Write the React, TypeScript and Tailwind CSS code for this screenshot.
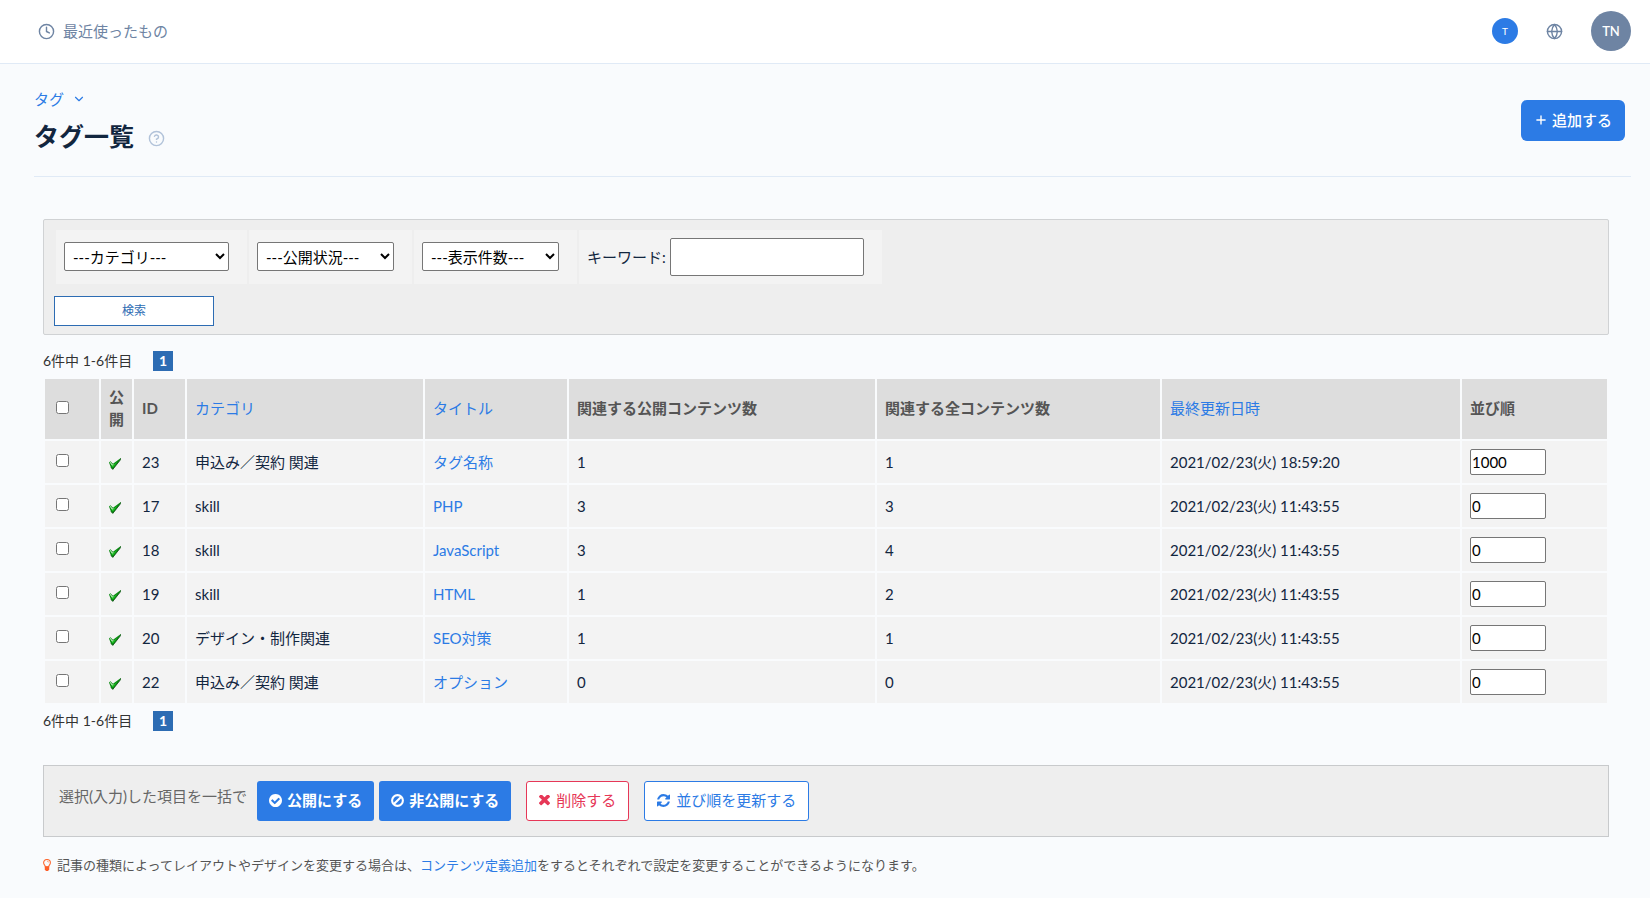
import React, { useState } from 'react';
import { FiChevronDown, FiClock, FiGlobe, FiHelpCircle, FiPlus } from 'react-icons/fi';

interface Tag {
    id: number;
    category: string;
    title: string;
    published: number;
    total: number;
    updatedAt: string;
    order: string;
}

const TAGS: Tag[] = [
    { id: 23, category: '申込み／契約 関連', title: 'タグ名称', published: 1, total: 1, updatedAt: '2021/02/23(火) 18:59:20', order: '1000' },
    { id: 17, category: 'skill', title: 'PHP', published: 3, total: 3, updatedAt: '2021/02/23(火) 11:43:55', order: '0' },
    { id: 18, category: 'skill', title: 'JavaScript', published: 3, total: 4, updatedAt: '2021/02/23(火) 11:43:55', order: '0' },
    { id: 19, category: 'skill', title: 'HTML', published: 1, total: 2, updatedAt: '2021/02/23(火) 11:43:55', order: '0' },
    { id: 20, category: 'デザイン・制作関連', title: 'SEO対策', published: 1, total: 1, updatedAt: '2021/02/23(火) 11:43:55', order: '0' },
    { id: 22, category: '申込み／契約 関連', title: 'オプション', published: 0, total: 0, updatedAt: '2021/02/23(火) 11:43:55', order: '0' },
];

const CheckCircleIcon = () => (
    <svg viewBox="128 128 1536 1536" className="size-[13px]" fill="currentColor" aria-hidden="true">
        <path d="M1412 734q0-28-18-46l-91-90q-19-19-45-19t-45 19l-408 407-226-226q-19-19-45-19t-45 19l-91 90q-18 18-18 46 0 27 18 45l362 362q19 19 45 19 27 0 46-19l543-543q18-18 18-45zm252 162q0 209-103 385.5t-279.5 279.5-385.5 103-385.5-103-279.5-279.5-103-385.5 103-385.5 279.5-279.5 385.5-103 385.5 103 279.5 279.5 103 385.5z" />
    </svg>
);

const BanIcon = () => (
    <svg viewBox="0 0 13 13" className="size-[13px]" fill="none" stroke="currentColor" strokeWidth="2.1" aria-hidden="true">
        <circle cx="6.5" cy="6.5" r="5.4" />
        <path d="M2.7 10.3l7.6-7.6" />
    </svg>
);

const TimesIcon = () => (
    <svg viewBox="302 434 1188 1188" className="size-[11px]" fill="currentColor" aria-hidden="true">
        <path d="M1490 1322q0 40-28 68l-136 136q-28 28-68 28t-68-28l-294-294-294 294q-28 28-68 28t-68-28l-136-136q-28-28-28-68t28-68l294-294-294-294q-28-28-28-68t28-68l136-136q28-28 68-28t68 28l294 294 294-294q28-28 68-28t68 28l136 136q28 28 28 68t-28 68l-294 294 294 294q28 28 28 68z" />
    </svg>
);

const RefreshIcon = () => (
    <svg viewBox="0 0 1536 1536" className="size-[13px]" fill="currentColor" aria-hidden="true">
        <path d="M1511 928q0 5-1 7-64 268-268 434.5t-478 166.5q-146 0-282.5-55t-243.5-157l-129 129q-19 19-45 19t-45-19-19-45v-448q0-26 19-45t45-19h448q26 0 45 19t19 45-19 45l-137 137q71 66 161 102t187 36q134 0 250-65t186-179q11-17 53-117 8-23 30-23h192q13 0 22.5 9.5t9.5 22.5zm25-800v448q0 26-19 45t-45 19h-448q-26 0-45-19t-19-45 19-45l138-138q-148-137-349-137-134 0-250 65t-186 179q-11 17-53 117-8 23-30 23h-199q-13 0-22.5-9.5t-9.5-22.5v-7q65-268 270-434.5t480-166.5q146 0 284 55.5t245 156.5l130-129q19-19 45-19t45 19 19 45z" />
    </svg>
);

const BulbIcon = () => (
    <svg viewBox="0 0 8 12" className="h-3 w-2" fill="none" stroke="#fd6a33" aria-hidden="true">
        <path d="M2.4 8C2.4 6.4.6 5.9.6 3.8a3.4 3.3 0 0 1 6.8 0c0 2.1-1.8 2.6-1.8 4.2z" strokeWidth="1.1" />
        <path d="M4.2 2.2c.8 0 1.4.5 1.4 1.2" strokeWidth=".7" />
        <path d="M1.8 7.2h4.4v3.2L5 11.9H3l-1.2-1.5z" fill="#fd5f2a" stroke="none" />
    </svg>
);

const PublishedIcon = () => (
    <svg viewBox="0 0 12 12" className="size-3" role="img" aria-label="公開">
        <path d="M0 4.4l1.4-1.2L4 5.8 11.8 0l-.2 1.6-7.8 9.9L2 9.8z" fill="#0a8a12" />
        <path d="M.8 4.6l.8-.5 1.8 2.4 1.4-.8L3.6 8.6z" fill="#c9f2c9" />
        <path d="M2.2 7.2l1.5.4L8.6 3.6 4 9.6z" fill="#1fc426" />
        <path d="M11.8.2l-.2 1.4-7.8 9.8L2 9.6" fill="none" stroke="#0b4d10" strokeWidth=".8" />
    </svg>
);

const Pager: React.FC = () => (
    <div className="flex h-5 items-center gap-[21px] text-sm text-[#333]">
        <span>6件中 1-6件目</span>
        <span className="flex size-5 items-center justify-center bg-[#2d6cb3] font-bold text-white">1</span>
    </div>
);

const FilterSelect: React.FC<{ label: string; className: string }> = ({ label, className }) => (
    <div className="bg-[#f3f3f3] py-3 pl-2 pr-[18px]">
        <select
            aria-label={label}
            className={`block h-[29px] rounded-[2px] border border-[#767676] bg-white px-1 text-[15px] text-black ${className}`}
        >
            <option>---{label}---</option>
        </select>
    </div>
);

const SolidButton: React.FC<{ icon: React.ReactNode; children: React.ReactNode }> = ({ icon, children }) => (
    <button type="button" className="flex h-10 items-center gap-[5px] rounded-[3px] bg-[#2c7be5] px-3 pb-[2px] font-bold text-white">
        {icon}
        {children}
    </button>
);

const OutlineButton: React.FC<{ icon: React.ReactNode; className: string; children: React.ReactNode }> = ({ icon, className, children }) => (
    <button type="button" className={`flex h-10 items-center gap-[6px] rounded-[3px] border bg-white px-3 pb-[2px] ${className}`}>
        {icon}
        {children}
    </button>
);

const Header: React.FC = () => (
    <header className="flex h-16 items-center justify-between border-b border-[#e0eaf6] bg-white pb-px pl-[38px] pr-[19px] text-[#6e84a3]">
        <a href="#recent" className="flex items-center gap-2">
            <FiClock size={17} />
            <span>最近使ったもの</span>
        </a>
        <div className="flex items-center gap-7">
            <span className="flex size-[26px] items-center justify-center rounded-full bg-[#2c7be5] text-[10px] text-white">T</span>
            <button type="button" aria-label="言語">
                <FiGlobe size={17} />
            </button>
            <button type="button" className="flex size-10 items-center justify-center rounded-full bg-[#6e84a3] text-[13px] font-semibold text-white">
                TN
            </button>
        </div>
    </header>
);

const TagTable: React.FC = () => {
    const [orders, setOrders] = useState<Record<number, string>>(
        Object.fromEntries(TAGS.map(tag => [tag.id, tag.order]))
    );
    const [selected, setSelected] = useState<number[]>([]);

    const toggle = (id: number) => {
        setSelected(s => (s.includes(id) ? s.filter(x => x !== id) : [...s, id]));
    };

    const toggleAll = () => {
        setSelected(s => (s.length === TAGS.length ? [] : TAGS.map(tag => tag.id)));
    };

    return (
        <table className="w-full border-separate border-spacing-[2px] text-left">
            <thead>
                <tr className="h-[60px] text-[#555] [&>th]:bg-[#ddd] [&>th]:px-2 [&>th]:pb-[2px]">
                    <th className="w-[54px]">
                        <input type="checkbox" aria-label="すべて選択" className="mb-[2px] ml-[3px] block size-[13px]" checked={selected.length === TAGS.length} onChange={toggleAll} />
                    </th>
                    <th className="w-[31px]">公開</th>
                    <th className="w-[51px]">ID</th>
                    <th className="w-[236px] font-normal"><a href="#category" className="text-[#2c7be5]">カテゴリ</a></th>
                    <th className="w-[142px] font-normal"><a href="#title" className="text-[#2c7be5]">タイトル</a></th>
                    <th className="w-[306px]">関連する公開コンテンツ数</th>
                    <th className="w-[283px]">関連する全コンテンツ数</th>
                    <th className="w-[298px] font-normal"><a href="#updated" className="text-[#2c7be5]">最終更新日時</a></th>
                    <th>並び順</th>
                </tr>
            </thead>
            <tbody>
                {TAGS.map(tag => (
                    <tr key={tag.id} className="h-[42px] [&>td]:bg-[#f3f3f3] [&>td]:px-2">
                        <td>
                            <input type="checkbox" aria-label={`${tag.title}を選択`} className="mb-[3px] ml-[3px] block size-[13px]" checked={selected.includes(tag.id)} onChange={() => toggle(tag.id)} />
                        </td>
                        <td className="pt-1"><PublishedIcon /></td>
                        <td className="pb-px">{tag.id}</td>
                        <td className="pb-px">{tag.category}</td>
                        <td className="pb-px"><a href={`#tag-${tag.id}`} className="text-[#2c7be5]">{tag.title}</a></td>
                        <td className="pb-px">{tag.published}</td>
                        <td className="pb-px">{tag.total}</td>
                        <td className="pb-px">{tag.updatedAt}</td>
                        <td>
                            <input
                                type="text"
                                aria-label={`${tag.title}の並び順`}
                                value={orders[tag.id]}
                                onChange={e => setOrders(o => ({ ...o, [tag.id]: e.target.value }))}
                                className="block h-[26px] w-[76px] rounded-[2px] border border-[#767676] bg-white px-px text-black"
                            />
                        </td>
                    </tr>
                ))}
            </tbody>
        </table>
    );
};

const App: React.FC = () => (
    <div className="min-h-screen bg-[#f9fbfd] font-[Lato,'Noto_Sans_CJK_JP',sans-serif] text-[15px] leading-[22px] text-[#12263f]">
        <Header />

        <div className="ml-[34px] mr-[19px] flex items-start justify-between border-b border-[#e0eaf6] pb-[23px] pt-6">
            <div>
                <a href="#tags" className="flex items-center gap-2 text-[#2c7be5]">
                    タグ
                    <FiChevronDown size={14} />
                </a>
                <div className="flex items-end gap-[14px] pt-[9px]">
                    <h1 className="text-[25px] font-bold leading-[34px]">タグ一覧</h1>
                    <button type="button" aria-label="ヘルプ" className="pb-[6px] text-[#b1c2d9]">
                        <FiHelpCircle size={17} />
                    </button>
                </div>
            </div>
            <button type="button" className="mr-[6px] mt-3 flex h-[41px] items-center gap-1 rounded-md bg-[#2c7be5] px-[13px] pb-px font-medium text-white">
                <FiPlus size={14} strokeWidth={2.4} />
                追加する
            </button>
        </div>

        <main className="pl-[43px] pr-[41px] pt-[42px]">
            <form className="rounded-[2px] border border-[#d0d2d4] bg-[#eee] px-[10px] pb-2 pt-[10px]" onSubmit={e => e.preventDefault()}>
                <div className="ml-[2px] flex flex-wrap gap-[2px]">
                    <FilterSelect label="カテゴリ" className="w-[165px]" />
                    <FilterSelect label="公開状況" className="w-[137px]" />
                    <FilterSelect label="表示件数" className="w-[137px]" />
                    <label className="flex items-center gap-1 bg-[#f3f3f3] py-2 pl-2 pr-[18px]">
                        キーワード:
                        <input type="text" className="h-[38px] w-[194px] rounded-[2px] border border-[#767676] bg-white px-1" />
                    </label>
                </div>
                <button type="submit" className="mt-3 block h-[30px] w-40 border border-[#2d6cb3] bg-white text-xs text-[#2d6cb3]">
                    検索
                </button>
            </form>

            <div className="pb-[6px] pt-4">
                <Pager />
            </div>
            <TagTable />
            <div className="pt-[6px]">
                <Pager />
            </div>

            <div className="mt-[34px] flex flex-wrap items-center border border-[#c8cacc] bg-[#eee] px-[15px] py-[15px]">
                <span className="mr-[10px] pb-[10px] text-[#666]">選択(入力)した項目を一括で</span>
                <div className="flex flex-wrap gap-[15px]">
                    <div className="flex gap-[5px]">
                        <SolidButton icon={<CheckCircleIcon />}>公開にする</SolidButton>
                        <SolidButton icon={<BanIcon />}>非公開にする</SolidButton>
                    </div>
                    <OutlineButton icon={<TimesIcon />} className="border-[#e63757] text-[#e63757]">削除する</OutlineButton>
                    <OutlineButton icon={<RefreshIcon />} className="border-[#2c7be5] text-[#2c7be5]">並び順を更新する</OutlineButton>
                </div>
            </div>

            <p className="flex items-center gap-[6px] pb-5 pt-[17px] text-[13px] text-[#555]">
                <BulbIcon />
                <span>
                    記事の種類によってレイアウトやデザインを変更する場合は、<a href="#definition" className="text-[#2c7be5]">コンテンツ定義追加</a>をするとそれぞれで設定を変更することができるようになります。
                </span>
            </p>
        </main>
    </div>
);

export default App;
